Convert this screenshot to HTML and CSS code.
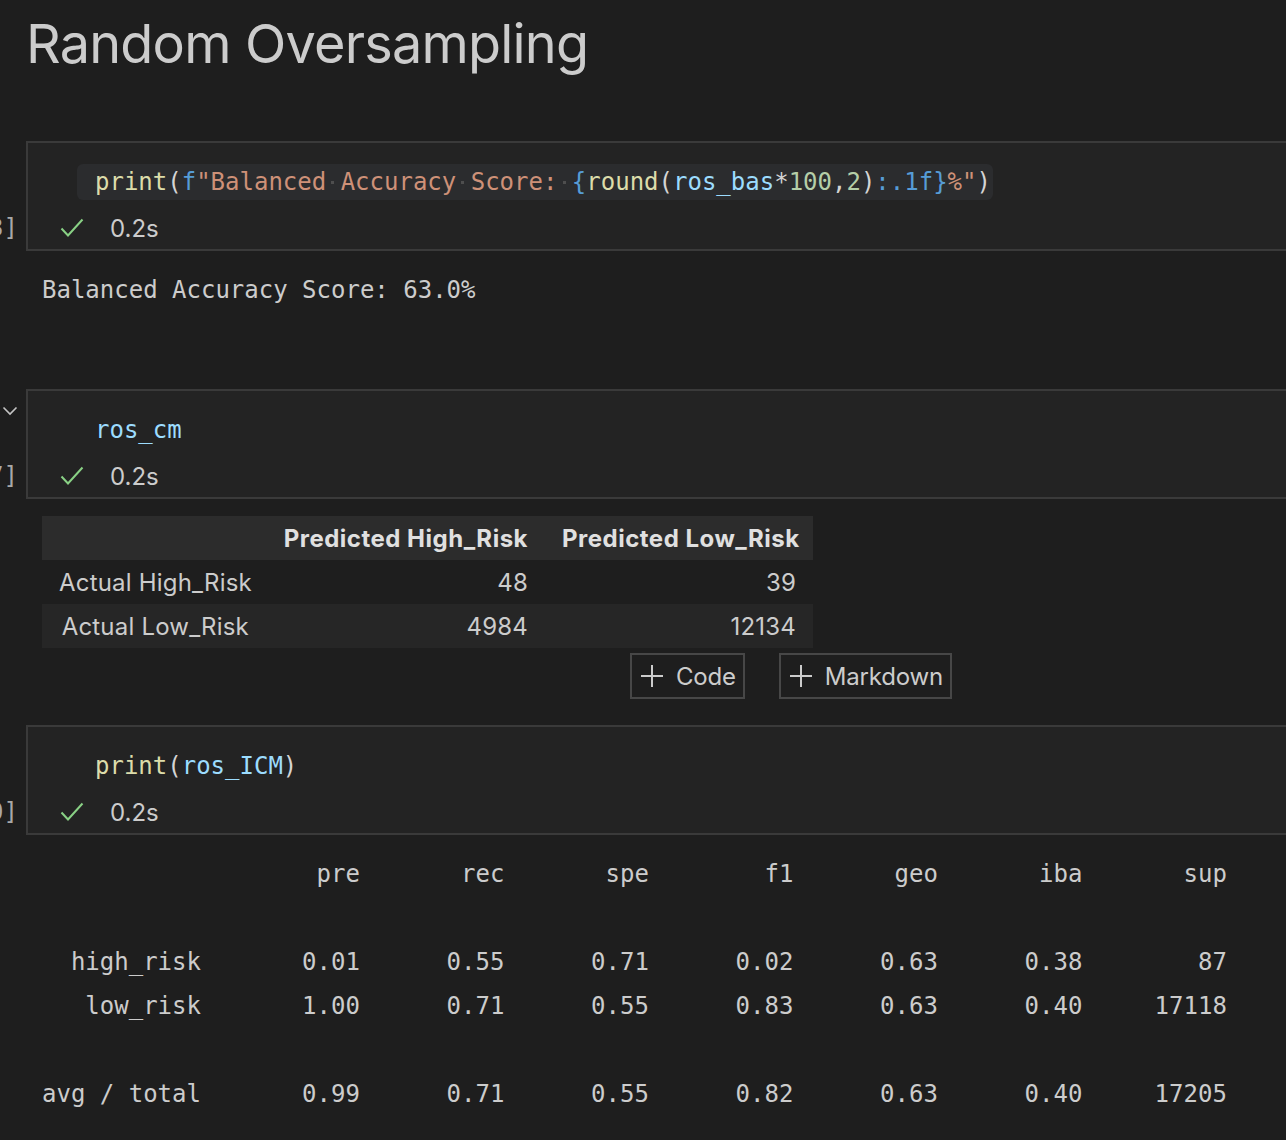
FILE: index.html
```html
<!DOCTYPE html>
<html lang="en">
<head>
<meta charset="utf-8">
<title>Random Oversampling</title>
<link rel="stylesheet" href="styles.css">
</head>
<body>
<div class="notebook">
  <h1 class="md-title">Random Oversampling</h1>

  <div class="cell-row">
    <div class="gutter">
      <div class="gutter-top"></div>
      <div class="exec"><span>[13]</span></div>
    </div>
    <div class="cell">
      <div class="code-line"><span class="line-text hl"><span class="t-fn">print</span><span class="t-p">(</span><span class="t-kw">f</span><span class="t-str">"Balanced<span class="ws"> </span>Accuracy<span class="ws"> </span>Score:<span class="ws"> </span></span><span class="t-kw">{</span><span class="t-fn">round</span><span class="t-p">(</span><span class="t-var">ros_bas</span><span class="t-p">*</span><span class="t-num">100</span><span class="t-p">,</span><span class="t-num">2</span><span class="t-p">)</span><span class="t-kw">:.1f}</span><span class="t-str">%"</span><span class="t-p">)</span></span></div>
      <div class="status">
        <svg class="check" viewBox="0 0 24 20" width="24" height="20"><polyline points="1.5,10.5 8,17.5 22.5,1.5" fill="none" stroke="#89d185" stroke-width="2"/></svg>
        <span class="time">0.2s</span>
      </div>
    </div>
  </div>
  <div class="output"><pre class="stdout">Balanced Accuracy Score: 63.0%</pre></div>
  <div class="insert-bar"></div>

  <div class="cell-row">
    <div class="gutter">
      <div class="gutter-top"><svg class="chevron" viewBox="0 0 16 10" width="16" height="10"><polyline points="1.5,1.5 8,8 14.5,1.5" fill="none" stroke="#c5c5c5" stroke-width="1.6"/></svg></div>
      <div class="exec"><span>[17]</span></div>
    </div>
    <div class="cell">
      <div class="code-line"><span class="line-text"><span class="t-var">ros_cm</span></span></div>
      <div class="status">
        <svg class="check" viewBox="0 0 24 20" width="24" height="20"><polyline points="1.5,10.5 8,17.5 22.5,1.5" fill="none" stroke="#89d185" stroke-width="2"/></svg>
        <span class="time">0.2s</span>
      </div>
    </div>
  </div>
  <div class="output">
    <table class="df">
      <thead>
        <tr><th class="c-idx"></th><th class="c-a">Predicted High_Risk</th><th class="c-b">Predicted Low_Risk</th></tr>
      </thead>
      <tbody>
        <tr><th>Actual High_Risk</th><td>48</td><td>39</td></tr>
        <tr><th>Actual Low_Risk</th><td>4984</td><td>12134</td></tr>
      </tbody>
    </table>
  </div>
  <div class="insert-bar">
    <button class="add-btn"><svg viewBox="0 0 24 24" width="24" height="24"><path d="M12 1v22M1 12h22" stroke="#cccccc" stroke-width="2" fill="none"/></svg><span>Code</span></button>
    <button class="add-btn"><svg viewBox="0 0 24 24" width="24" height="24"><path d="M12 1v22M1 12h22" stroke="#cccccc" stroke-width="2" fill="none"/></svg><span>Markdown</span></button>
  </div>

  <div class="cell-row">
    <div class="gutter">
      <div class="gutter-top"></div>
      <div class="exec"><span>[20]</span></div>
    </div>
    <div class="cell">
      <div class="code-line"><span class="line-text"><span class="t-fn">print</span><span class="t-p">(</span><span class="t-var">ros_ICM</span><span class="t-p">)</span></span></div>
      <div class="status">
        <svg class="check" viewBox="0 0 24 20" width="24" height="20"><polyline points="1.5,10.5 8,17.5 22.5,1.5" fill="none" stroke="#89d185" stroke-width="2"/></svg>
        <span class="time">0.2s</span>
      </div>
    </div>
  </div>
  <div class="output"><pre class="stdout">                   pre       rec       spe        f1       geo       iba       sup

  high_risk       0.01      0.55      0.71      0.02      0.63      0.38        87
   low_risk       1.00      0.71      0.55      0.83      0.63      0.40     17118

avg / total       0.99      0.71      0.55      0.82      0.63      0.40     17205</pre></div>
</div>
</body>
</html>
```

FILE: styles.css
```css
html, body {
  margin: 0;
  padding: 0;
  background: #1e1e1e;
  overflow: hidden;
}

.notebook {
  width: 1340px;
  font-family: Inter, "Noto Sans", sans-serif;
  color: #cccccc;
}

.md-title {
  box-sizing: border-box;
  height: 141px;
  margin: 0;
  padding: 11px 0 0 26px;
  font-size: 54px;
  line-height: 66px;
  font-weight: 400;
  color: #cccccc;
  letter-spacing: -0.8px;
}

.cell-row {
  display: flex;
}

.gutter {
  width: 26px;
  flex: none;
  display: flex;
  flex-direction: column;
}

.gutter-top {
  height: 27px;
  display: flex;
  align-items: flex-end;
  padding-left: 2px;
}

.chevron {
  display: block;
}

.exec {
  margin-top: auto;
  margin-bottom: 5px;
  height: 36px;
  display: flex;
  justify-content: flex-end;
  align-items: center;
  overflow: hidden;
  padding-right: 8px;
  font-family: "DejaVu Sans Mono", monospace;
  font-size: 24px;
  color: #a8a8a8;
  white-space: nowrap;
}

.cell {
  flex: 1;
  height: 110px;
  box-sizing: border-box;
  border: 2px solid #3a3a3a;
  background: #232323;
}

.code-line {
  padding-top: 21px;
  height: 36px;
  padding-left: 49px;
}

.line-text {
  display: inline-block;
  height: 36px;
  line-height: 36px;
  padding: 0 2px 0 18px;
  border-radius: 6px;
  font-family: "DejaVu Sans Mono", monospace;
  font-size: 24px;
  white-space: pre;
  color: #d4d4d4;
}

.line-text.hl {
  background: #2b2c2e;
}

.t-fn { color: #dcdcaa; }
.t-p { color: #d4d4d4; }
.t-kw { color: #569cd6; }
.t-str { color: #ce9178; }
.t-var { color: #9cdcfe; }
.t-num { color: #b5cea8; }

.ws {
  position: relative;
}

.ws::after {
  content: "";
  position: absolute;
  left: 50%;
  top: 50%;
  width: 3px;
  height: 3px;
  margin: -1px 0 0 -2px;
  background: #4e4e4e;
}

.status {
  margin-top: 10px;
  height: 36px;
  display: flex;
  align-items: center;
  padding-left: 32px;
  gap: 26px;
}

.check {
  display: block;
}

.time {
  font-size: 24px;
  color: #cccccc;
}

.output {
  padding: 17px 0 5px 42px;
}

.stdout {
  margin: 0;
  font-family: "DejaVu Sans Mono", monospace;
  font-size: 24px;
  line-height: 44px;
  color: #cccccc;
}

.insert-bar {
  height: 72px;
  box-sizing: border-box;
  display: flex;
  align-items: flex-start;
  gap: 34px;
  padding-left: 630px;
}

.add-btn {
  height: 46px;
  box-sizing: border-box;
  display: flex;
  align-items: center;
  gap: 12px;
  padding: 0 7px 0 8px;
  border: 2px solid #474747;
  background: #1e1e1e;
  color: #cccccc;
  font-family: Inter, "Noto Sans", sans-serif;
  font-size: 24px;
  letter-spacing: -0.2px;
}

.add-btn svg {
  display: block;
}

.df {
  border-collapse: collapse;
  table-layout: fixed;
  width: 771px;
  font-size: 24px;
  color: #cccccc;
  letter-spacing: 0.2px;
}

.df th, .df td {
  height: 44px;
  padding: 0 17px;
  text-align: right;
  white-space: nowrap;
}

.df tbody th {
  font-weight: 400;
}

.df thead th {
  font-weight: 700;
  color: #e0e0e0;
  background: #2c2c2c;
  letter-spacing: 0.5px;
}

.df tbody tr:nth-child(2) {
  background: #262626;
}

.c-idx { width: 224px; box-sizing: border-box; }
.c-a { width: 279px; box-sizing: border-box; }
.c-b { width: 268px; box-sizing: border-box; }
```
